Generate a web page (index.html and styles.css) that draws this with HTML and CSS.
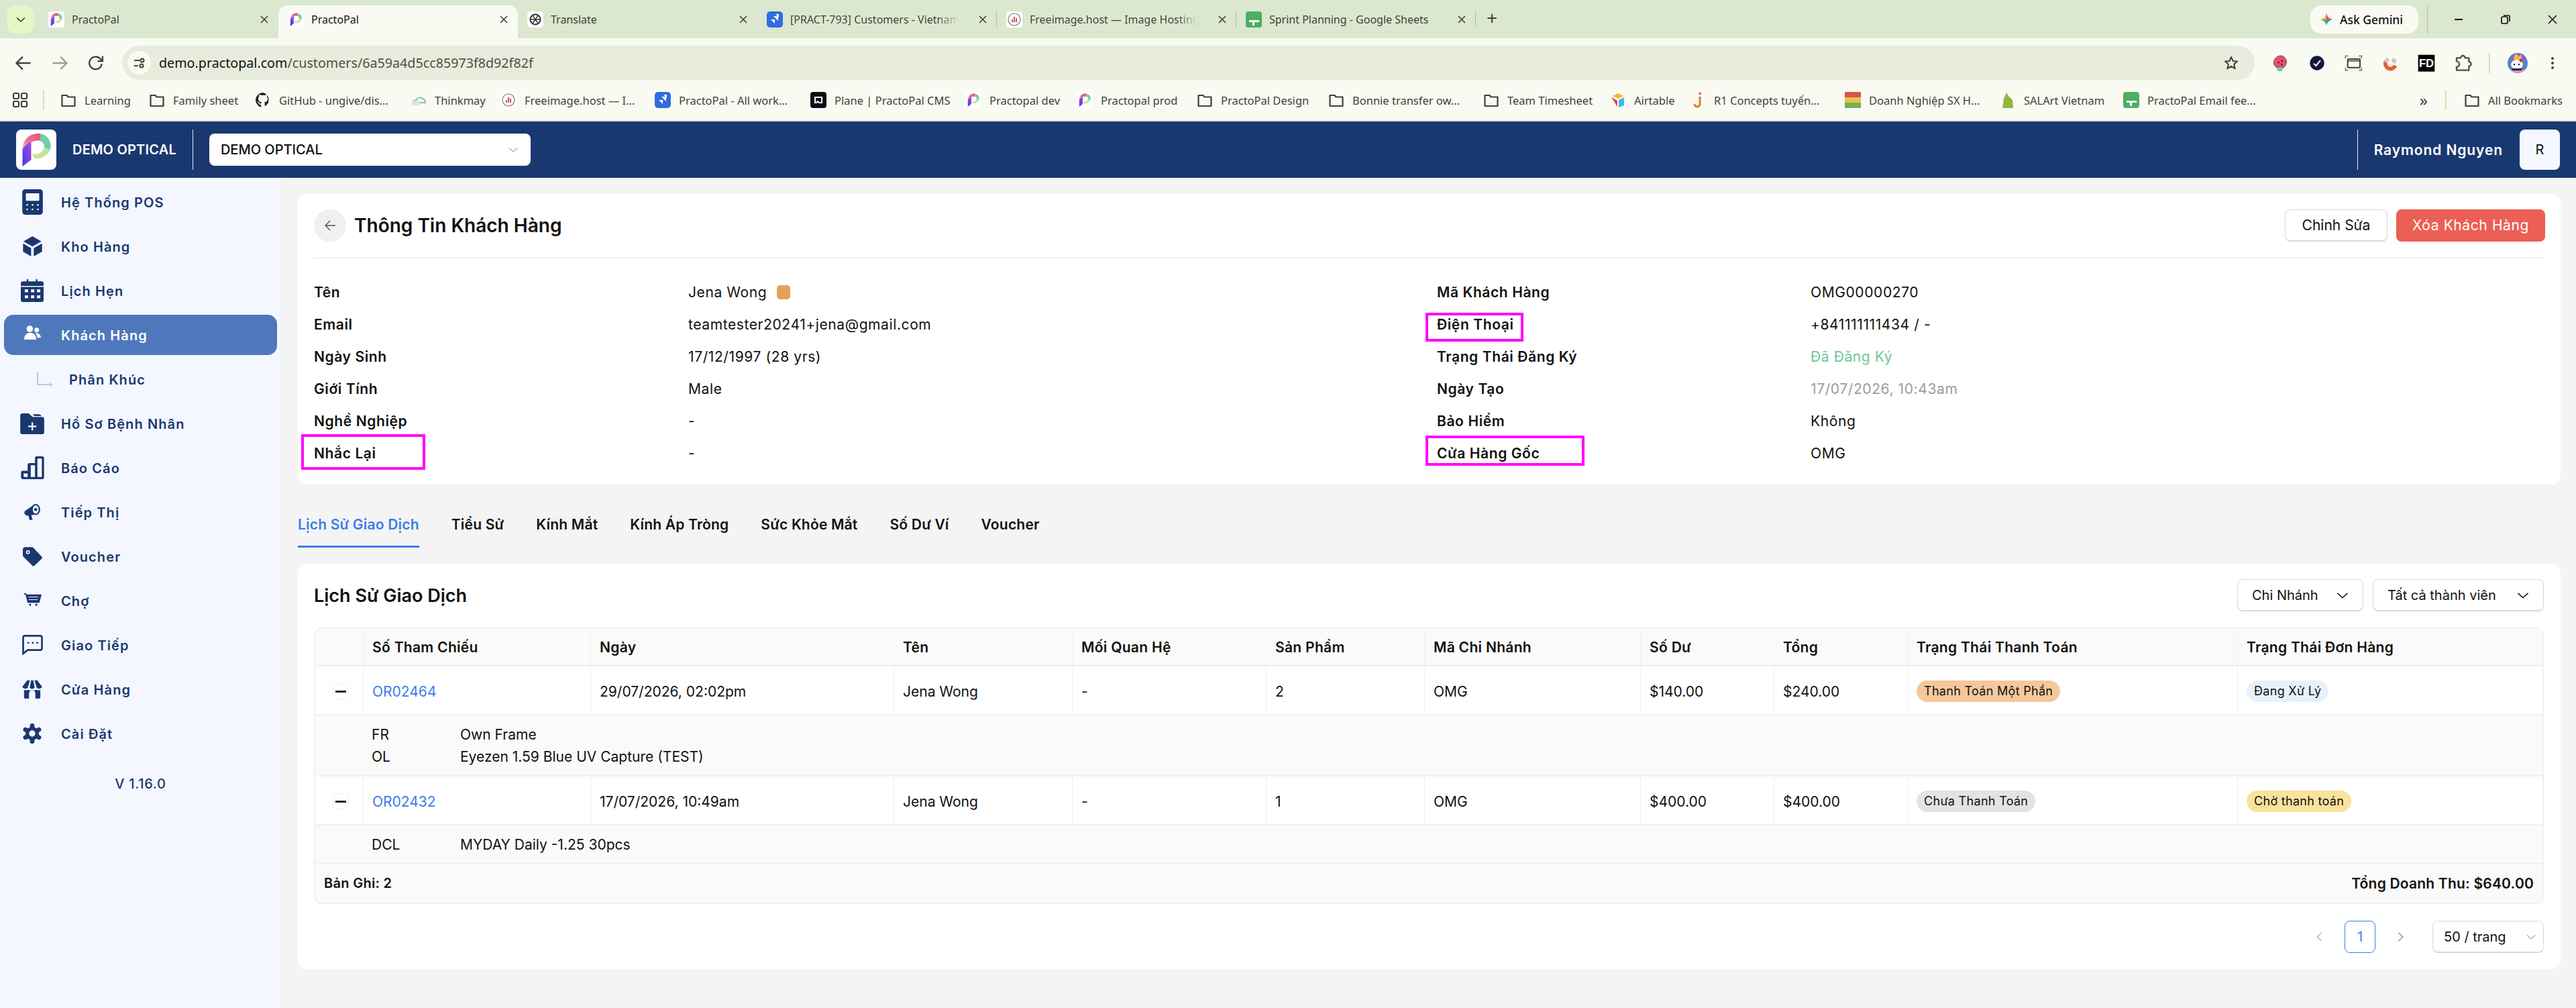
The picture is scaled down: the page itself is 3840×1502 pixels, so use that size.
FILE: index.html
```html
<!DOCTYPE html>
<html lang="vi">
<head>
    <meta charset="UTF-8">
    <title>PractoPal</title>
    <link rel="stylesheet" href="styles.css">
</head>
<body>
    <svg class="defs" width="0" height="0">
        <defs>
            <linearGradient id="ppStem" x1="0" y1="1" x2="1" y2="0">
                <stop offset="0" stop-color="#4a35f0"/>
                <stop offset="1" stop-color="#a64fe0"/>
            </linearGradient>
            <linearGradient id="ppTop" x1="0" y1="1" x2="1" y2="0">
                <stop offset="0" stop-color="#f0c48c"/>
                <stop offset="0.4" stop-color="#ee6f9c"/>
                <stop offset="1" stop-color="#dc5a70"/>
            </linearGradient>
            <symbol id="pp" viewBox="0 0 60 60">
                <rect width="60" height="60" rx="8" fill="#fff"/>
                <path d="M9.500 55V30c1-5 6-10 13-13v28z" fill="url(#ppStem)"/>
                <path d="M9.500 30C10 13 22 5 36 6l1 11c-6-1-11 0-15 2-5 2-10 6-12.500 11z" fill="url(#ppTop)"/>
                <path d="M36 6a19 19 0 0 1 15 24l-9-3a9 9 0 0 0-6-10z" fill="#6fcdaa"/>
                <path d="M51 30c-4 9-13 14-24 13l-3-7c8 2 15-1 18-9z" fill="#c6e39c"/>
            </symbol>
            <symbol id="folder" viewBox="0 0 24 24">
                <path d="M2.500 5h7l2 2.500h10V21h-19z" fill="none" stroke="#3e4239" stroke-width="2.200" stroke-linejoin="round"/>
            </symbol>
            <symbol id="jira" viewBox="0 0 24 24">
                <rect width="24" height="24" rx="5" fill="#2f6ce0"/>
                <path d="M6 12h6v6zM10 7h7v7zM13 4h5v5z" fill="#fff"/>
            </symbol>
            <symbol id="sheet" viewBox="0 0 24 24">
                <rect width="24" height="24" rx="4" fill="#4caf63"/>
                <path d="M5 13h15v3H13v5h-3v-5H5z" fill="#fff"/>
            </symbol>
            <symbol id="free" viewBox="0 0 24 24">
                <rect width="24" height="24" rx="4" fill="#fff"/>
                <circle cx="12" cy="12" r="9" fill="none" stroke="#9a9a9a" stroke-width="1.600"/>
                <path d="M8 16v-4h2v4zM11 16V8h2v8zM14 16v-6h2v6z" fill="#d9534f"/>
            </symbol>
            <symbol id="x" viewBox="0 0 16 16">
                <path d="M3 3l10 10M13 3L3 13" stroke="#3e4239" stroke-width="1.600" fill="none"/>
            </symbol>
            <symbol id="chev" viewBox="0 0 16 16">
                <path d="M2 5.500L8 11l6-5.500" stroke="currentColor" stroke-width="1.200" fill="none"/>
            </symbol>
        </defs>
    </svg>

    <!-- browser chrome -->
    <div class="tabstrip">
        <div class="tab-search"><svg class="ic16"><use href="#chev"/></svg></div>
        <div class="tab"><svg class="fav"><use href="#pp"/></svg><span class="tab-title">PractoPal</span><svg class="tab-x"><use href="#x"/></svg></div>
        <div class="tab active"><svg class="fav"><use href="#pp"/></svg><span class="tab-title">PractoPal</span><svg class="tab-x"><use href="#x"/></svg></div>
        <div class="tab"><svg class="fav" viewBox="0 0 24 24"><rect width="24" height="24" rx="5" fill="#fff"/><circle cx="12" cy="12" r="7.500" fill="none" stroke="#333" stroke-width="2"/><path d="M8 6l8 12M16 6L8 18M5 12h14" stroke="#333" stroke-width="1.400"/></svg><span class="tab-title">Translate</span><svg class="tab-x"><use href="#x"/></svg></div>
        <div class="tab sep"><svg class="fav"><use href="#jira"/></svg><span class="tab-title fade">[PRACT-793] Customers - Vietnam</span><svg class="tab-x"><use href="#x"/></svg></div>
        <div class="tab sep"><svg class="fav"><use href="#free"/></svg><span class="tab-title fade">Freeimage.host — Image Hosting</span><svg class="tab-x"><use href="#x"/></svg></div>
        <div class="tab sep"><svg class="fav"><use href="#sheet"/></svg><span class="tab-title">Sprint Planning - Google Sheets</span><svg class="tab-x"><use href="#x"/></svg></div>
        <div class="tab-new">+</div>
        <div class="gemini">
            <svg class="gem-ic" viewBox="0 0 24 24"><path d="M12 1c.5 6 5 10.500 11 11H12z" fill="#e8563f"/><path d="M23 12c-6 .5-10.500 5-11 11V12z" fill="#3a8cf0"/><path d="M12 23c-.5-6-5-10.500-11-11h11z" fill="#4fb06a"/><path d="M1 12c6-.5 10.500-5 11-11v11z" fill="#f2b63a"/></svg>
            <span>Ask Gemini</span>
        </div>
        <div class="win-btns">
            <svg class="ic16" viewBox="0 0 16 16"><path d="M2 8h12" stroke="#111" stroke-width="2"/></svg>
            <svg class="ic16" viewBox="0 0 16 16"><rect x="2" y="4" width="9" height="10" rx="2" fill="none" stroke="#111" stroke-width="1.700"/><path d="M5 2h7a2 2 0 0 1 2 2v7" fill="none" stroke="#111" stroke-width="1.700"/></svg>
            <svg class="ic16" viewBox="0 0 16 16"><path d="M2 2l12 12M14 2L2 14" stroke="#111" stroke-width="1.600"/></svg>
        </div>
    </div>

    <div class="toolbar">
        <svg class="nav-ic" viewBox="0 0 24 24"><path d="M21 12H4M11 4l-8 8 8 8" fill="none" stroke="#3e4239" stroke-width="2"/></svg>
        <svg class="nav-ic" viewBox="0 0 24 24"><path d="M3 12h17M13 4l8 8-8 8" fill="none" stroke="#9b9f94" stroke-width="2"/></svg>
        <svg class="nav-ic" viewBox="0 0 24 24"><path d="M19.500 13a8 8 0 1 1-2-6.500L20 9M20.500 3v6.500H14" fill="none" stroke="#3e4239" stroke-width="2"/></svg>
        <div class="omnibox">
            <span class="site-pill"><svg class="ic20" viewBox="0 0 20 20"><path d="M2 6h8M2 14h6" stroke="#3e4239" stroke-width="2"/><circle cx="14" cy="6" r="2.500" fill="none" stroke="#3e4239" stroke-width="2"/><circle cx="13" cy="14" r="2.500" fill="none" stroke="#3e4239" stroke-width="2"/></svg></span>
            <span class="url">demo.practopal.com<span class="url-path">/customers/6a59a4d5cc85973f8d92f82f</span></span>
            <svg class="star" viewBox="0 0 24 24"><path d="M12 3l2.700 6 6.300.6-4.800 4.200 1.500 6.400L12 16.800l-5.700 3.400 1.500-6.400L3 9.600 9.300 9z" fill="none" stroke="#3e4239" stroke-width="2" stroke-linejoin="round"/></svg>
        </div>
        <div class="ext-icons">
            <svg class="ic28" viewBox="15 28 84 84"><path d="M57 37c18-2 31 18 28 33-5 20-20 25-28 25-12 0-27-10-29-25 0-15 12-32 29-33z" fill="#e94f68" stroke="#555" stroke-width="3"/><path d="M40 88h32l-10 16H50z" fill="#6fd9b0" stroke="#555" stroke-width="2"/><circle cx="50" cy="68" r="3"/><circle cx="65" cy="60" r="3"/><circle cx="64" cy="76" r="3"/></svg>
            <svg class="ic28" viewBox="181 28 84 84"><circle cx="223" cy="70" r="32" fill="#12183a"/><path d="M208 72l10 10 20-24" stroke="#fff" stroke-width="6" fill="none"/></svg>
            <svg class="ic28" viewBox="343 26 84 84"><rect x="360" y="50" width="55" height="38" rx="3" fill="none" stroke="#3e4239" stroke-width="6"/><path d="M360 58h55" stroke="#3e4239" stroke-width="5"/><path d="M350 48V36h12M410 36h12v12M422 88v12h-12M362 100h-12V88" fill="none" stroke="#58944f" stroke-width="5"/></svg>
            <svg class="ic28" viewBox="505 28 84 84"><path d="M527 64a23 23 0 0 0 43 17" fill="none" stroke="#e6602c" stroke-width="17"/><path d="M518 58l17-13 10 13-15 13zM558 46l18 10-8 18-16-10z" fill="#c9c9c9"/></svg>
            <svg class="ic28" viewBox="668 28 84 84"><rect x="673" y="33" width="74" height="75" fill="#000"/><text x="710" y="88" class="fd-text">FD</text></svg>
            <svg class="ic28" viewBox="833 26 84 84"><path d="M845 45h18a10 10 0 0 1 20 0h17v17a10 10 0 0 1 0 20v18h-55V85a12 12 0 0 0 0-25z" fill="none" stroke="#47543f" stroke-width="7" stroke-linejoin="round"/></svg>
            <span class="vsep"></span>
            <svg class="ic32" viewBox="0 0 32 32"><defs><clipPath id="avClip"><circle cx="16" cy="16" r="15"/></clipPath></defs><g clip-path="url(#avClip)"><rect width="32" height="32" fill="#5b82c4"/><path d="M6 0h22v12H6z" fill="#7a6ad8"/><path d="M15 2l2 5 4-4 1 8H10l1-6z" fill="#f5c02e"/><ellipse cx="15" cy="18" rx="9" ry="7" fill="#fff"/><circle cx="11" cy="18" r="1.200" fill="#111"/><circle cx="18" cy="18" r="1.200" fill="#111"/><circle cx="21" cy="12" r="2.500" fill="#d8324d"/><path d="M5 26h22v6H5z" fill="#e58abf"/><path d="M8 24h14v3H8z" fill="#23283d"/></g></svg>
            <svg class="ic24 menu-ic" viewBox="0 0 24 24"><circle cx="12" cy="5" r="2" fill="#3e4239"/><circle cx="12" cy="12" r="2" fill="#3e4239"/><circle cx="12" cy="19" r="2" fill="#3e4239"/></svg>
        </div>
    </div>

    <div class="bookmarks">
        <svg class="apps-ic" viewBox="0 0 24 24"><g fill="none" stroke="#3e4239" stroke-width="2.200"><rect x="2" y="2" width="8" height="8" rx="2"/><rect x="14" y="2" width="8" height="8" rx="2"/><rect x="2" y="14" width="8" height="8" rx="2"/><rect x="14" y="14" width="8" height="8" rx="2"/></g></svg>
        <span class="vsep apps-sep"></span>
        <div class="bm-grid">
            <a class="bm"><svg class="bm-ic"><use href="#folder"/></svg>Learning</a>
            <a class="bm"><svg class="bm-ic"><use href="#folder"/></svg>Family sheet</a>
            <a class="bm"><svg class="bm-ic" viewBox="0 0 24 24"><path d="M12 1a11 11 0 0 0-3.500 21.400c.6.100.8-.2.800-.5v-3c-3 .6-3.700-1.300-3.900-2-.2-.4-.7-1.300-1.200-1.500-.4-.3-1-.8 0-.8s1.600.9 1.900 1.300c1 1.800 2.800 1.300 3.300 1 .1-.8.400-1.300.7-1.600-2.500-.3-5-1.300-5-5.400 0-1.200.4-2.200 1.100-3-.1-.3-.5-1.400.1-2.900 0 0 .9-.3 3 1.100a10 10 0 0 1 5.500 0c2.100-1.400 3-1.100 3-1.100.6 1.500.2 2.600.1 2.900.7.800 1.100 1.800 1.100 3 0 4.200-2.600 5.100-5 5.400.4.300.7 1 .7 2v3.100c0 .3.200.6.800.5A11 11 0 0 0 12 1z" fill="#222"/></svg>GitHub - ungive/dis...</a>
            <a class="bm"><svg class="bm-ic" viewBox="0 0 24 24"><path d="M4 16c0-3 3-4 5-4 1-4 8-5 10-1 2 0 3 2 3 5z" fill="none" stroke="#7fc6c0" stroke-width="2"/><path d="M2 14h12v6H2z" fill="#d9e6d8"/></svg>Thinkmay</a>
            <a class="bm"><svg class="bm-ic"><use href="#free"/></svg>Freeimage.host — I...</a>
            <a class="bm"><svg class="bm-ic"><use href="#jira"/></svg>PractoPal - All work...</a>
            <a class="bm"><svg class="bm-ic" viewBox="0 0 24 24"><rect width="24" height="24" rx="4" fill="#0b0f14"/><path d="M7 8h10v8h-4l-2-2-2 2H7z" fill="none" stroke="#fff" stroke-width="2"/></svg>Plane | PractoPal CMS</a>
            <a class="bm"><svg class="bm-ic"><use href="#pp"/></svg>Practopal dev</a>
            <a class="bm"><svg class="bm-ic"><use href="#pp"/></svg>Practopal prod</a>
            <a class="bm"><svg class="bm-ic"><use href="#folder"/></svg>PractoPal Design</a>
            <a class="bm"><svg class="bm-ic"><use href="#folder"/></svg>Bonnie transfer ow...</a>
            <a class="bm"><svg class="bm-ic"><use href="#folder"/></svg>Team Timesheet</a>
            <a class="bm"><svg class="bm-ic" viewBox="0 0 24 24"><path d="M12 2l8 4-8 4-8-4z" fill="#f5b72e"/><path d="M13 12l8-4v12l-8 3z" fill="#3fb7ea"/><path d="M2 8l9 5v9z" fill="#e2415f"/></svg>Airtable</a>
            <a class="bm"><svg class="bm-ic" viewBox="0 0 24 24"><path d="M15 7v11a4 4 0 0 1-8 0" fill="none" stroke="#e8782c" stroke-width="3"/><circle cx="15" cy="2.500" r="2" fill="#e8782c"/></svg>R1 Concepts tuyển...</a>
            <a class="bm"><svg class="bm-ic" viewBox="0 0 24 24"><rect width="24" height="8" fill="#d9534f"/><rect y="8" width="24" height="8" fill="#e8c24a"/><rect y="16" width="24" height="8" fill="#6fb356"/></svg>Doanh Nghiệp SX H...</a>
            <a class="bm"><svg class="bm-ic" viewBox="0 0 24 24"><path d="M10 1l3 5 6 6 1 12H4l2-14z" fill="#93b63d"/></svg>SALArt Vietnam</a>
            <a class="bm"><svg class="bm-ic"><use href="#sheet"/></svg>PractoPal Email fee...</a>
        </div>
        <div class="bm-end">
            <span class="bm-more">»</span>
            <span class="vsep"></span>
            <a class="bm"><svg class="bm-ic"><use href="#folder"/></svg>All Bookmarks</a>
        </div>
    </div>

    <!-- app header -->
    <header class="app-header">
        <svg class="app-logo"><use href="#pp"/></svg>
        <span class="store-name">DEMO OPTICAL</span>
        <span class="hdr-sep"></span>
        <div class="store-select"><span>DEMO OPTICAL</span><svg class="ic16"><use href="#chev"/></svg></div>
        <div class="hdr-right">
            <span class="hdr-sep"></span>
            <span class="user-name">Raymond Nguyen</span>
            <span class="avatar">R</span>
        </div>
    </header>

    <div class="app-body">
        <aside class="sidebar">
            <a class="nav-item"><span class="nav-ic-box"><svg width="31" height="38" viewBox="36 28 92 114"><rect x="36" y="28" width="92" height="114" rx="14" fill="#1a3870"/><rect x="52" y="46" width="60" height="34" rx="3" fill="#f4f7ff"/><g fill="#f4f7ff"><circle cx="58" cy="98" r="4"/><circle cx="82" cy="98" r="4"/><circle cx="106" cy="98" r="4"/><circle cx="58" cy="118" r="4"/><circle cx="82" cy="118" r="4"/><circle cx="106" cy="118" r="4"/></g></svg></span><span>Hệ Thống POS</span></a>
            <a class="nav-item"><span class="nav-ic-box"><svg width="29" height="30" viewBox="40 243 85 90"><path d="M82 243l40 23-40 23-40-23zM40 275l36 21v37l-36-21zM125 275l-37 21v37l37-21z" fill="#1a3870"/></svg></span><span>Kho Hàng</span></a>
            <a class="nav-item"><span class="nav-ic-box"><svg width="34" height="34" viewBox="32 432 103 103"><path d="M59 432h7v14h-7zM100 432h7v14h-7zM32 462v-10a10 10 0 0 1 10-10h83a10 10 0 0 1 10 10v10zM32 467h103v58a10 10 0 0 1-10 10H42a10 10 0 0 1-10-10z" fill="#1a3870"/><g fill="#f4f7ff"><rect x="50" y="478" width="15" height="13"/><rect x="78" y="478" width="15" height="13"/><rect x="105" y="478" width="15" height="13"/><rect x="50" y="505" width="15" height="13"/><rect x="78" y="505" width="15" height="13"/><rect x="105" y="505" width="15" height="13"/></g></svg></span><span>Lịch Hẹn</span></a>
            <a class="nav-item active"><span class="nav-ic-box"><svg width="25" height="28" viewBox="38 640 75 84"><circle cx="63" cy="655" r="14.500" fill="#fff"/><path d="M38 703c0-21 12-31 27-31s27 10 27 31z" fill="#fff"/><circle cx="94" cy="660" r="10.500" fill="#fff"/><path d="M88 675c12-3 25 5 25 20H97c0-7-4-15-9-20z" fill="#fff"/></svg></span><span>Khách Hàng</span></a>
            <a class="nav-item sub"><span class="nav-ic-box"><svg width="25" height="25" viewBox="82 842 76 74"><path d="M88 845v57h58" fill="none" stroke="#bcc8de" stroke-width="6"/><path d="M145 891l11 11-11 11z" fill="#bcc8de"/></svg></span><span>Phân Khúc</span></a>
            <a class="nav-item"><span class="nav-ic-box"><svg width="36" height="31" viewBox="30 1032 107 93"><path d="M30 1042a10 10 0 0 1 10-10h28l17 16h42a10 10 0 0 1 10 10v57a10 10 0 0 1-10 10H40a10 10 0 0 1-10-10z" fill="#1a3870"/><path d="M86 1036h26a13 13 0 0 1 13 8H94z" fill="#1a3870"/><path d="M66 1090h36M84 1072v36" stroke="#f4f7ff" stroke-width="7"/></svg></span><span>Hồ Sơ Bệnh Nhân</span></a>
            <a class="nav-item"><span class="nav-ic-box"><svg width="35" height="34" viewBox="32 1225 104 103"><path fill-rule="evenodd" d="M95 1233a8 8 0 0 1 8-8h25a8 8 0 0 1 8 8v87a8 8 0 0 1-8 8H40a8 8 0 0 1-8-8v-22a8 8 0 0 1 8-8h22v-27a8 8 0 0 1 8-8h25zM106 1235h20v83h-20zM76 1265h19v53H76zM44 1302h18v16H44z" fill="#1a3870"/></svg></span><span>Báo Cáo</span></a>
            <a class="nav-item"><span class="nav-ic-box"><svg width="24" height="24" viewBox="48 47 72 73"><path d="M52 78l40-28 8 45-40 5c-14-10-14-12-8-22z" fill="#1a3870"/><path d="M66 96l12-2 8 24-14 2z" fill="#1a3870"/><ellipse cx="100" cy="72" rx="20" ry="25" fill="#1a3870"/><ellipse cx="100" cy="72" rx="13" ry="19" fill="#f4f7ff"/><circle cx="100" cy="72" r="7" fill="#1a3870"/></svg></span><span>Tiếp Thị</span></a>
            <a class="nav-item"><span class="nav-ic-box"><svg width="29" height="29" viewBox="40 240 88 87"><path d="M40 252a12 12 0 0 1 12-12h30a8 8 0 0 1 6 3l37 40a7 7 0 0 1 0 10l-32 31a7 7 0 0 1-10 0l-39-39a10 10 0 0 1-4-8z" fill="#1a3870"/><circle cx="63" cy="263" r="9" fill="#f4f7ff"/><circle cx="63" cy="263" r="4" fill="#1a3870"/></svg></span><span>Voucher</span></a>
            <a class="nav-item"><span class="nav-ic-box"><svg width="27" height="25" viewBox="40 442 82 76"><path d="M42 446l10 4 10 38" fill="none" stroke="#1a3870" stroke-width="6"/><path d="M52 450h70l-10 38H60z" fill="#1a3870"/><path d="M62 462h46M64 474h40" stroke="#f4f7ff" stroke-width="3"/><circle cx="70" cy="497" r="5" fill="#1a3870"/><circle cx="98" cy="497" r="5" fill="#1a3870"/></svg></span><span>Chợ</span></a>
            <a class="nav-item"><span class="nav-ic-box"><svg width="31" height="30" viewBox="38 632 92 90"><path d="M50 636h68a8 8 0 0 1 8 8v48a8 8 0 0 1-8 8H62l-20 16v-72a8 8 0 0 1 8-8z" fill="none" stroke="#1a3870" stroke-width="8"/><g fill="#1a3870"><rect x="61" y="664" width="8" height="7"/><rect x="81" y="664" width="8" height="7"/><rect x="101" y="664" width="8" height="7"/></g></svg></span><span>Giao Tiếp</span></a>
            <a class="nav-item"><span class="nav-ic-box"><svg width="30" height="28" viewBox="40 835 88 83"><path d="M62 837h12l-10 33c-8 8-18 4-24-4zM79 837h10l6 33c-6 6-16 6-22 0zM94 837h12l22 29c-6 8-16 12-24 4z" fill="#1a3870"/><path d="M48 880c8 2 14 2 18-2 8 6 10 6 18 0 8 6 10 6 18 0 4 4 10 4 18 2v32a6 6 0 0 1-6 6H98v-23a14 14 0 0 0-28 0v23H54a6 6 0 0 1-6-6z" fill="#1a3870"/></svg></span><span>Cửa Hàng</span></a>
            <a class="nav-item"><span class="nav-ic-box"><svg width="30" height="30" viewBox="40 1030 88 90"><g stroke="#1a3870" stroke-width="20" stroke-linecap="round"><path d="M84 1040v70M53.700 1057.500l60.600 35M114.300 1057.500l-60.600 35"/></g><circle cx="84" cy="1075" r="30" fill="#1a3870"/><circle cx="84" cy="1075" r="14" fill="#f4f7ff"/></svg></span><span>Cài Đặt</span></a>
            <div class="version">V 1.16.0</div>
        </aside>

        <main class="content">
            <section class="card info-card">
                <div class="card-head">
                    <span class="back-btn"><svg width="20" height="20" viewBox="0 0 20 20"><path d="M18 10H3M10 3l-7 7 7 7" fill="none" stroke="#555" stroke-width="1.400"/></svg></span>
                    <h1>Thông Tin Khách Hàng</h1>
                    <div class="head-actions">
                        <button class="btn">Chỉnh Sửa</button>
                        <button class="btn btn-danger">Xóa Khách Hàng</button>
                    </div>
                </div>
                <div class="info-grid">
                    <div class="lbl">Tên</div><div class="val">Jena Wong <span class="swatch"></span></div>
                    <div class="lbl">Mã Khách Hàng</div><div class="val">OMG00000270</div>
                    <div class="lbl">Email</div><div class="val">teamtester20241+jena@gmail.com</div>
                    <div class="lbl">Điện Thoại<span class="mark mark-phone"></span></div><div class="val">+841111111434 / -</div>
                    <div class="lbl">Ngày Sinh</div><div class="val">17/12/1997 (28 yrs)</div>
                    <div class="lbl">Trạng Thái Đăng Ký</div><div class="val green">Đã Đăng Ký</div>
                    <div class="lbl">Giới Tính</div><div class="val">Male</div>
                    <div class="lbl">Ngày Tạo</div><div class="val gray">17/07/2026, 10:43am</div>
                    <div class="lbl">Nghề Nghiệp</div><div class="val">-</div>
                    <div class="lbl">Bảo Hiểm</div><div class="val">Không</div>
                    <div class="lbl">Nhắc Lại<span class="mark mark-remind"></span></div><div class="val">-</div>
                    <div class="lbl">Cửa Hàng Gốc<span class="mark mark-store"></span></div><div class="val">OMG</div>
                </div>
            </section>

            <nav class="tabs">
                <a class="tab-link current">Lịch Sử Giao Dịch</a>
                <a class="tab-link">Tiểu Sử</a>
                <a class="tab-link">Kính Mắt</a>
                <a class="tab-link">Kính Áp Tròng</a>
                <a class="tab-link">Sức Khỏe Mắt</a>
                <a class="tab-link">Số Dư Ví</a>
                <a class="tab-link">Voucher</a>
            </nav>

            <section class="card orders-card">
                <div class="orders-head">
                    <h2>Lịch Sử Giao Dịch</h2>
                    <div class="filters">
                        <div class="filter filter-branch">Chi Nhánh<svg class="chev-lg"><use href="#chev"/></svg></div>
                        <div class="filter filter-member">Tất cả thành viên<svg class="chev-lg"><use href="#chev"/></svg></div>
                    </div>
                </div>
                <table class="orders">
                    <colgroup>
                        <col class="c-exp"><col class="c-ref"><col class="c-date"><col class="c-name"><col class="c-rel">
                        <col class="c-prod"><col class="c-branch"><col class="c-bal"><col class="c-total"><col class="c-pay"><col class="c-status">
                    </colgroup>
                    <thead>
                        <tr>
                            <th></th><th>Số Tham Chiếu</th><th>Ngày</th><th>Tên</th><th>Mối Quan Hệ</th><th>Sản Phẩm</th>
                            <th>Mã Chi Nhánh</th><th>Số Dư</th><th>Tổng</th><th>Trạng Thái Thanh Toán</th><th>Trạng Thái Đơn Hàng</th>
                        </tr>
                    </thead>
                    <tbody>
                        <tr class="order">
                            <td class="exp"><span class="exp-btn"></span></td><td><a class="ref">OR02464</a></td><td>29/07/2026, 02:02pm</td><td>Jena Wong</td><td>-</td><td>2</td><td>OMG</td><td>$140.00</td><td>$240.00</td>
                            <td><span class="badge b-orange">Thanh Toán Một Phần</span></td><td><span class="badge b-blue">Đang Xử Lý</span></td>
                        </tr>
                        <tr class="detail detail-two">
                            <td></td>
                            <td colspan="10">
                                <div class="line"><span class="code">FR</span>Own Frame</div>
                                <div class="line"><span class="code">OL</span>Eyezen 1.59 Blue UV Capture (TEST)</div>
                            </td>
                        </tr>
                        <tr class="order">
                            <td class="exp"><span class="exp-btn"></span></td><td><a class="ref">OR02432</a></td><td>17/07/2026, 10:49am</td><td>Jena Wong</td><td>-</td><td>1</td><td>OMG</td><td>$400.00</td><td>$400.00</td>
                            <td><span class="badge b-gray">Chưa Thanh Toán</span></td><td><span class="badge b-yellow">Chờ thanh toán</span></td>
                        </tr>
                        <tr class="detail detail-one">
                            <td></td>
                            <td colspan="10"><div class="line"><span class="code">DCL</span>MYDAY Daily -1.25 30pcs</div></td>
                        </tr>
                    </tbody>
                    <tfoot>
                        <tr>
                            <td colspan="11"><div class="foot-row"><span>Bản Ghi: 2</span><span class="foot-total">Tổng Doanh Thu: $640.00</span></div></td>
                        </tr>
                    </tfoot>
                </table>
                <div class="pager">
                    <svg class="pg-arrow" viewBox="0 0 16 16"><path d="M10 3L5 8l5 5" fill="none" stroke="#bbb" stroke-width="1.300"/></svg>
                    <span class="pg-num">1</span>
                    <svg class="pg-arrow" viewBox="0 0 16 16"><path d="M6 3l5 5-5 5" fill="none" stroke="#999" stroke-width="1.300"/></svg>
                    <div class="pg-size">50 / trang<svg class="ic16"><use href="#chev"/></svg></div>
                </div>
            </section>
        </main>
    </div>
</body>
</html>
```

FILE: styles.css
```css
* {
    margin: 0;
    padding: 0;
    box-sizing: border-box;
}

body {
    width: 3840px;
    height: 1502px;
    overflow: hidden;
    background: #f4f4f4;
    color: #111;
    font-family: Inter, "Noto Sans", sans-serif;
    font-size: 20px;
}

.defs {
    position: absolute;
}

.ic16 { width: 16px; height: 16px; flex: none; }
.ic20 { width: 20px; height: 20px; flex: none; }
.ic24 { width: 24px; height: 24px; flex: none; }
.ic28 { width: 28px; height: 28px; flex: none; }
.ic32 { width: 32px; height: 32px; flex: none; }

/* browser chrome */
.tabstrip {
    height: 57px;
    background: #dbe7cf;
    display: flex;
    align-items: flex-start;
    font-family: "Noto Sans", sans-serif;
    font-size: 16px;
    color: #3e4239;
    padding: 8px 27px 0 10px;
}

.tab-search {
    width: 41px;
    height: 42px;
    border-radius: 14px;
    background: #e2f7c5;
    display: flex;
    align-items: center;
    justify-content: center;
    color: #111;
    margin-right: 7px;
}

.tab {
    width: 357px;
    height: 49px;
    padding: 0 13px 7px 14px;
    display: flex;
    align-items: center;
    gap: 11px;
    position: relative;
}

.tab.active {
    background: #f9faf2;
    border-radius: 14px 14px 0 0;
    color: #111;
}

.tab.sep::after {
    content: '';
    position: absolute;
    right: 0;
    top: 9px;
    height: 24px;
    width: 1px;
    background: #a8c79a;
}

.fav {
    width: 24px;
    height: 24px;
    flex: none;
}

.tab-title {
    flex: 1;
    white-space: nowrap;
    overflow: hidden;
}

.tab-title.fade {
    flex: none;
    width: 250px;
    margin-right: auto;
    -webkit-mask-image: linear-gradient(90deg, #000 88%, transparent);
    mask-image: linear-gradient(90deg, #000 88%, transparent);
}

.tab-x {
    width: 16px;
    height: 16px;
    flex: none;
}

.tab-new {
    margin: 2px 0 0 16px;
    font-size: 28px;
    line-height: 32px;
    color: #3e4239;
}

.gemini {
    margin-left: auto;
    width: 161px;
    height: 42px;
    border-radius: 16px;
    background: #f9faf2;
    color: #111;
    display: flex;
    align-items: center;
    gap: 9px;
    padding-left: 13px;
    font-size: 17.500px;
    font-weight: 500;
    white-space: nowrap;
}

.gem-ic {
    width: 22px;
    height: 26px;
    flex: none;
}

.win-btns {
    margin-left: 13px;
    height: 42px;
    padding-left: 38px;
    border-left: 1px solid #a8c79a;
    display: flex;
    align-items: center;
    gap: 54px;
}

.toolbar {
    height: 62px;
    background: #f9faf2;
    display: flex;
    align-items: center;
    padding: 11px 0 0 21px;
}

.nav-ic {
    width: 28px;
    height: 28px;
    margin-right: 26px;
    flex: none;
}

.omnibox {
    width: 3179px;
    height: 51px;
    margin-left: -1px;
    border-radius: 26px;
    background: #e7ecdd;
    display: flex;
    align-items: center;
    padding: 0 23px 0 8px;
    font-family: "Noto Sans", sans-serif;
    font-size: 19.700px;
    color: #111;
}

.site-pill {
    width: 35px;
    height: 35px;
    border-radius: 50%;
    background: #f9faf2;
    display: flex;
    align-items: center;
    justify-content: center;
    margin-right: 12px;
}

.url-path {
    color: #4e5248;
}

.star {
    margin-left: auto;
    width: 24px;
    height: 24px;
}

.ext-icons {
    display: flex;
    align-items: center;
    gap: 26.500px;
    margin-left: 24px;
}

.vsep {
    display: inline-block;
    width: 2px;
    height: 30px;
    background: #c5e8ae;
}

.ext-icons .vsep {
    margin: 0 -2px;
}

.fd-text {
    fill: #fff;
    font-family: "Liberation Sans", sans-serif;
    font-weight: 700;
    font-size: 50px;
    text-anchor: middle;
}

.menu-ic {
    margin-left: -2px;
}

.bookmarks {
    height: 62px;
    background: #f9faf2;
    border-bottom: 2px solid #dcdcdc;
    display: flex;
    align-items: center;
    padding-left: 18px;
    font-family: "Noto Sans", sans-serif;
    font-size: 16.500px;
    color: #3e4239;
}

.apps-ic {
    width: 24px;
    height: 24px;
    flex: none;
}

.apps-sep {
    margin: 0 24px 0 22px;
}

.bm-grid {
    display: grid;
    grid-template-columns: 132px 158px 232px 134px 230px 232px 231px 166px 179px 196px 231px 189px 119px 231px 231px 184px 200px;
}

.bm {
    display: flex;
    align-items: center;
    gap: 12px;
    white-space: nowrap;
    overflow: hidden;
}

.bm-ic {
    width: 24px;
    height: 24px;
    flex: none;
}

.bm-end {
    margin-left: auto;
    padding-right: 20px;
    display: flex;
    align-items: center;
    gap: 26px;
}

.bm-more {
    font-size: 24px;
    line-height: 24px;
}

/* app header */
.app-header {
    height: 84px;
    background: #1a3870;
    display: flex;
    align-items: center;
    padding: 0 24px;
    color: #fff;
}

.app-logo {
    width: 60px;
    height: 60px;
    flex: none;
}

.store-name {
    margin-left: 24px;
    font-weight: 600;
    font-size: 20px;
    letter-spacing: 0.2px;
    white-space: nowrap;
}

.hdr-sep {
    width: 1px;
    height: 60px;
    background: #dfe5ef;
    margin-left: 24px;
    flex: none;
}

.store-select {
    width: 479px;
    height: 48px;
    margin-left: 24px;
    background: #fff;
    border-radius: 8px;
    color: #111;
    display: flex;
    align-items: center;
    justify-content: space-between;
    padding: 0 18px 0 17px;
    font-size: 20px;
    font-weight: 500;
}

.store-select svg {
    color: #aaa;
}

.hdr-right {
    margin-left: auto;
    display: flex;
    align-items: center;
}

.user-name {
    margin-left: 24px;
    font-weight: 600;
    font-size: 21px;
    letter-spacing: 0.9px;
    white-space: nowrap;
}

.avatar {
    width: 60px;
    height: 60px;
    margin-left: 25px;
    border-radius: 8px;
    background: #f4f7ff;
    color: #111;
    display: flex;
    align-items: center;
    justify-content: center;
    font-size: 20px;
}

.app-body {
    display: flex;
    height: 1237px;
}

/* sidebar */
.sidebar {
    width: 420px;
    flex: none;
    background: #f4f7ff;
    border-right: 1px solid #e6e9f2;
    padding: 3px 6px 0;
    color: #1a3870;
    font-weight: 600;
    letter-spacing: 1.1px;
}

.nav-item {
    height: 66px;
    display: flex;
    align-items: center;
    white-space: nowrap;
}

.nav-item > span:last-child {
    padding-top: 2px;
}

.nav-item.active {
    height: 60px;
    margin: 3px 0;
    background: #4f78bc;
    border-radius: 14px;
    color: #fff;
}

.nav-ic-box {
    width: 85px;
    display: flex;
    justify-content: center;
    padding-right: 1px;
    flex: none;
}

.nav-item.sub .nav-ic-box {
    width: 97px;
    padding-left: 24px;
}

.version {
    margin-top: 30px;
    text-align: center;
    font-weight: 500;
    letter-spacing: 0.7px;
}

/* content */
.content {
    flex: 1;
    padding: 24px 25px 0 24px;
}

.card {
    background: #fff;
    border-radius: 12px;
}

.info-card {
    height: 433px;
    padding: 24px 23px 0 24px;
}

.card-head {
    display: flex;
    align-items: center;
    height: 72px;
    padding-bottom: 24px;
    border-bottom: 2px solid #f0f0f0;
}

.back-btn {
    width: 48px;
    height: 48px;
    border-radius: 50%;
    background: #f0f0f0;
    display: flex;
    align-items: center;
    justify-content: center;
    flex: none;
}

h1 {
    margin-left: 12px;
    font-size: 28px;
    font-weight: 600;
}

.head-actions {
    margin-left: auto;
    display: flex;
    gap: 13px;
}

.btn {
    height: 48px;
    padding: 0;
    background: #fff;
    border: 1px solid #d9d9d9;
    border-bottom-width: 2px;
    border-radius: 8px;
    font: inherit;
    font-size: 21px;
    color: #111;
    width: 153px;
}

.btn-danger {
    width: 222px;
    background: #ec5f55;
    border-color: #ec5f55;
    color: #fff;
    letter-spacing: 0.6px;
}

.info-grid {
    display: grid;
    grid-template-columns: 558px 1116px 557px 1fr;
    grid-auto-rows: 48px;
    align-items: center;
    margin-top: 27px;
    font-size: 21px;
    line-height: 24px;
    letter-spacing: 0.6px;
}

.lbl {
    font-weight: 600;
    position: relative;
}

.green { color: #6ec79a; }
.gray { color: #9b9b9b; }

.swatch {
    display: inline-block;
    width: 20px;
    height: 21px;
    margin-left: 8px;
    border-radius: 5px;
    background: #e59f58;
    vertical-align: -3px;
}

/* pink annotation boxes drawn over the screenshot */
.mark {
    position: absolute;
    border: 4px solid #ff00ff;
    pointer-events: none;
}

.mark-remind {
    left: -19px;
    top: -17px;
    width: 185px;
    height: 53px;
}

.mark-phone {
    left: -17px;
    top: -6px;
    width: 146px;
    height: 43px;
}

.mark-store {
    left: -17px;
    top: -15px;
    width: 237px;
    height: 45px;
}

.tabs {
    height: 94px;
    display: flex;
    align-items: flex-end;
    gap: 48px;
    border-bottom: 1px solid #ececec;
    font-weight: 600;
    font-size: 21px;
    letter-spacing: 0.2px;
}

.tab-link {
    line-height: 30px;
    padding-bottom: 16px;
    border-bottom: 3px solid transparent;
    margin-bottom: -1px;
    white-space: nowrap;
}

.tab-link.current {
    color: #3b7de9;
    border-bottom-color: #3b7de9;
}

.orders-card {
    margin-top: 24px;
    height: 604px;
    padding: 23px 25px 0 24px;
}

.orders-head {
    display: flex;
    align-items: center;
    justify-content: space-between;
    height: 48px;
}

h2 {
    font-size: 27px;
    font-weight: 600;
}

.filters {
    display: flex;
    gap: 14px;
}

.filter,
.pg-size {
    height: 48px;
    border: 1px solid #d9d9d9;
    border-bottom-width: 2px;
    border-radius: 8px;
    background: #fff;
    display: flex;
    align-items: center;
    justify-content: space-between;
    white-space: nowrap;
}

.filter {
    padding: 0 20px 0 21px;
}

.chev-lg {
    width: 20px;
    height: 20px;
    flex: none;
}

.filter-branch { width: 188px; }
.filter-member { width: 255px; }

.orders {
    margin-top: 24px;
    width: 3322px;
    table-layout: fixed;
    border-collapse: separate;
    border-spacing: 0;
    border: 2px solid #f0f0f0;
    border-radius: 12px;
    font-size: 21px;
}

.c-exp { width: 71px; }
.c-ref { width: 339px; }
.c-date { width: 452px; }
.c-name { width: 266px; }
.c-rel { width: 289px; }
.c-prod { width: 236px; }
.c-branch { width: 322px; }
.c-bal { width: 199px; }
.c-total { width: 199px; }
.c-pay { width: 492px; }
.c-status { width: 455px; }

.orders th,
.orders td {
    padding: 0 13px;
    text-align: left;
    border-bottom: 2px solid #f0f0f0;
}

.orders th {
    height: 56px;
    background: #fafafa;
    font-weight: 600;
    letter-spacing: 0.3px;
    border-left: 1px solid #f0f0f0;
}

.orders th:first-child,
.order td:first-child {
    border-left: 0;
}

.orders th:first-child {
    border-radius: 10px 0 0 0;
}

.orders th:last-child {
    border-radius: 0 10px 0 0;
}

.order td {
    height: 73px;
    padding-top: 3px;
    border-left: 1px solid #f0f0f0;
}

.orders .exp {
    padding: 0 0 0 4px;
    text-align: center;
}

.exp-btn {
    display: inline-block;
    width: 24px;
    height: 24px;
    position: relative;
    vertical-align: middle;
    border: 1px solid #f0f0f0;
    border-radius: 6px;
}

.exp-btn::after {
    content: '';
    position: absolute;
    left: 3px;
    right: 3px;
    top: 10px;
    height: 3px;
    background: #222;
}

.ref {
    color: #3b7de9;
}

.detail td {
    background: #fafafa;
}

.detail-two td { height: 91px; }
.detail-one td { height: 58px; }

.line {
    display: flex;
    height: 33px;
    align-items: center;
}

.code {
    width: 132px;
    flex: none;
}

.badge {
    display: inline-block;
    height: 32px;
    line-height: 32px;
    padding: 0 11px;
    border-radius: 16px;
    font-size: 18px;
    letter-spacing: 0.3px;
    white-space: nowrap;
}

.b-orange { background: #f5c89b; }
.b-blue { background: #e6f1fd; }
.b-gray { background: #e3e3e3; }
.b-yellow { background: #f9e29d; }

.orders tfoot td {
    height: 57px;
    background: #fafafa;
    border-bottom: 0;
    border-radius: 0 0 10px 10px;
}

.foot-row {
    display: flex;
    justify-content: space-between;
    font-size: 20px;
    font-weight: 600;
    letter-spacing: 0.3px;
}

.foot-total {
    font-size: 21px;
    letter-spacing: 0.2px;
}

.pager {
    margin-top: 25px;
    display: flex;
    align-items: center;
    justify-content: flex-end;
}

.pg-arrow {
    width: 20px;
    height: 20px;
}

.pg-num {
    width: 46px;
    height: 48px;
    margin: 0 27px;
    border: 1px solid #3b7de9;
    border-radius: 8px;
    color: #3b7de9;
    display: flex;
    align-items: center;
    justify-content: center;
}

.pg-size {
    width: 166px;
    margin-left: 38px;
    padding: 0 10px 0 16px;
}

.pg-size svg {
    color: #aaa;
}
```
